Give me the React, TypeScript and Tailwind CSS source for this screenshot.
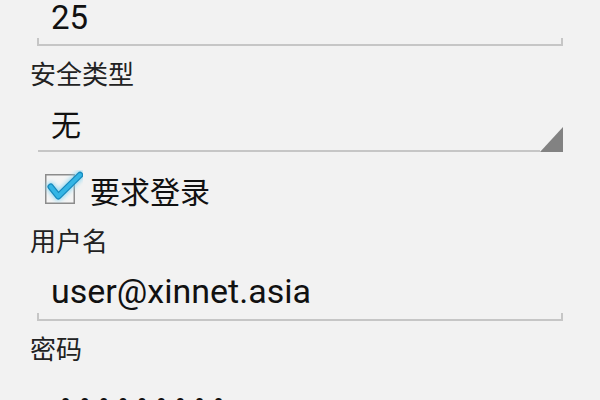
import React from "react";

const font = "font-['Roboto','Noto_Sans_CJK_SC',sans-serif]";

function FieldLabel({ children }: { children: React.ReactNode }) {
  return (
    <div className="mt-[12px] h-[34px] pl-[30px] text-[26px] leading-[34px] text-[#222]">
      {children}
    </div>
  );
}

function EditField({
  value,
  boxClass,
}: {
  value: string;
  boxClass: string;
}) {
  return (
    <div className="ml-[37px] mr-[37px] flex flex-col">
      <div className={`pl-[14px] text-[#111] ${boxClass}`}>{value}</div>
      <div className="h-[8px] border-x-2 border-b-2 border-[#c6c6c6]" />
    </div>
  );
}

function CheckIcon() {
  return (
    <svg width="40" height="36" viewBox="0 0 40 36" className="shrink-0">
      <defs>
        <filter id="glow" x="-30%" y="-30%" width="160%" height="160%">
          <feGaussianBlur stdDeviation="2" />
        </filter>
      </defs>
      <rect x="2.75" y="4.75" width="28.5" height="28.5" fill="#f4f4f4" stroke="#8c8c8c" strokeWidth="1.5" />
      <path
        d="M7.7 16.7 L15.3 26.2 L37 5"
        fill="none"
        stroke="#7fd2f0"
        strokeWidth="9"
        strokeLinecap="round"
        strokeLinejoin="round"
        filter="url(#glow)"
        opacity="0.8"
      />
      <path
        d="M7.7 16.7 L15.3 26.2 L37 5"
        fill="none"
        stroke="#1589bd"
        strokeWidth="6.5"
        strokeLinecap="round"
        strokeLinejoin="round"
      />
      <path
        d="M7.7 16.7 L15.3 26.2 L37 5"
        fill="none"
        stroke="#33b5e5"
        strokeWidth="4"
        strokeLinecap="round"
        strokeLinejoin="round"
      />
    </svg>
  );
}

export default function App() {
  return (
    <div className={`h-[400px] w-[600px] overflow-hidden bg-[#f2f2f2] ${font}`}>
      <EditField value="25" boxClass="h-[38px] text-[33px] leading-[36px]" />

      <FieldLabel>安全类型</FieldLabel>

      <div className="ml-[38px] mr-[37px] flex items-end">
        <div className="h-[60px] flex-1 border-b-2 border-[#c6c6c6] pl-[13px] pt-[10px] text-[30px] leading-[48px] text-[#111]">
          无
        </div>
        <svg width="23" height="25" viewBox="0 0 23 25" className="shrink-0">
          <polygon points="0,25 23,0 23,25" fill="#828282" />
        </svg>
      </div>

      <div className="flex h-[73px] items-start pl-[43px] pt-[18px]">
        <CheckIcon />
        <span className="ml-[7px] mt-[3px] text-[30px] leading-[40px] text-[#111]">要求登录</span>
      </div>

      <div className="h-[34px] pl-[30px] text-[26px] leading-[34px] text-[#222]">用户名</div>

      <EditField
        value="user@xinnet.asia"
        boxClass="h-[54px] pt-[11px] text-[34px] leading-[42px]"
      />

      <FieldLabel>密码</FieldLabel>

      <div className="ml-[37px] pl-[23px] pt-[15px] text-[33px] leading-[42px] tracking-[8px] text-[#111]">
        •••••••••
      </div>
    </div>
  );
}
